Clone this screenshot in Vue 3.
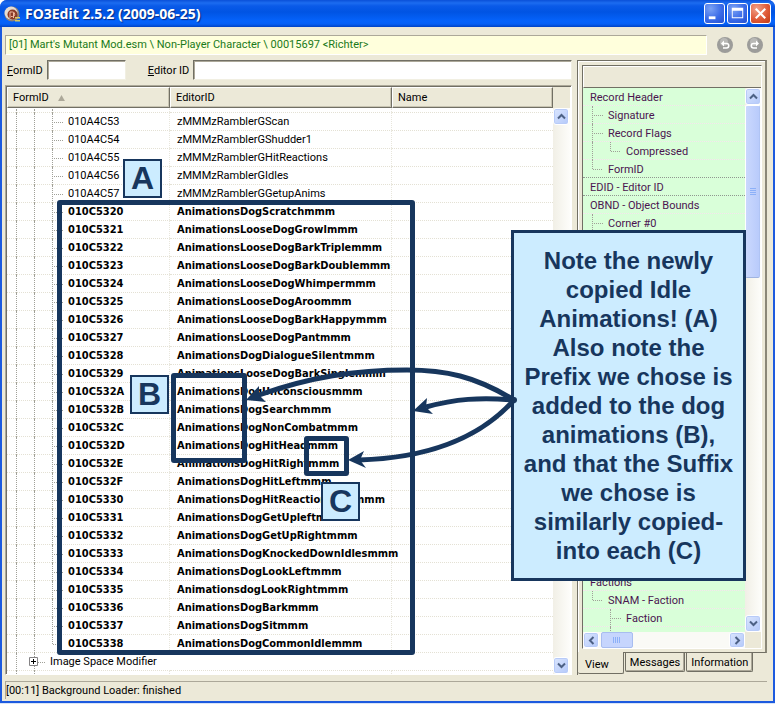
<script setup>
import { ref } from 'vue'

const formId = ref('')
const editorId = ref('')
const activeTab = ref('View')
const tabs = ['View', 'Messages', 'Information']

const plain = [
  ['010A4C53', 'zMMMzRamblerGScan'],
  ['010A4C54', 'zMMMzRamblerGShudder1'],
  ['010A4C55', 'zMMMzRamblerGHitReactions'],
  ['010A4C56', 'zMMMzRamblerGIdles'],
  ['010A4C57', 'zMMMzRamblerGGetupAnims'],
]
const copied = [
  ['010C5320', 'AnimationsDogScratchmmm'],
  ['010C5321', 'AnimationsLooseDogGrowlmmm'],
  ['010C5322', 'AnimationsLooseDogBarkTriplemmm'],
  ['010C5323', 'AnimationsLooseDogBarkDoublemmm'],
  ['010C5324', 'AnimationsLooseDogWhimpermmm'],
  ['010C5325', 'AnimationsLooseDogAroommm'],
  ['010C5326', 'AnimationsLooseDogBarkHappymmm'],
  ['010C5327', 'AnimationsLooseDogPantmmm'],
  ['010C5328', 'AnimationsDogDialogueSilentmmm'],
  ['010C5329', 'AnimationsLooseDogBarkSinglemmm'],
  ['010C532A', 'AnimationsDogUnconsciousmmm'],
  ['010C532B', 'AnimationsDogSearchmmm'],
  ['010C532C', 'AnimationsDogNonCombatmmm'],
  ['010C532D', 'AnimationsDogHitHeadmmm'],
  ['010C532E', 'AnimationsDogHitRightmmm'],
  ['010C532F', 'AnimationsDogHitLeftmmm'],
  ['010C5330', 'AnimationsDogHitReactionIdlesmmm'],
  ['010C5331', 'AnimationsDogGetUpleftmmm'],
  ['010C5332', 'AnimationsDogGetUpRightmmm'],
  ['010C5333', 'AnimationsDogKnockedDownIdlesmmm'],
  ['010C5334', 'AnimationsDogLookLeftmmm'],
  ['010C5335', 'AnimationsdogLookRightmmm'],
  ['010C5336', 'AnimationsDogBarkmmm'],
  ['010C5337', 'AnimationsDogSitmmm'],
  ['010C5338', 'AnimationsDogCommonIdlemmm'],
]
const rows = [
  ...plain.map(([id, name]) => ({ id, name, bold: false })),
  ...copied.map(([id, name]) => ({ id, name, bold: true })),
]

// guides: one entry per indent level ('', 'line', 'tee' or 'end')
const topFields = [
  { text: 'Record Header', guides: [] },
  { text: 'Signature', guides: ['tee'] },
  { text: 'Record Flags', guides: ['tee'] },
  { text: 'Compressed', guides: ['line', 'end'] },
  { text: 'FormID', guides: ['end'], section: true },
  { text: 'EDID - Editor ID', guides: [], section: true },
  { text: 'OBND - Object Bounds', guides: [] },
  { text: 'Corner #0', guides: ['tee'] },
]
const bottomFields = [
  { text: 'Factions', guides: [] },
  { text: 'SNAM - Faction', guides: ['end'] },
  { text: 'Faction', guides: ['', 'tee'] },
]
const noteLines = [
  'Note the newly',
  'copied Idle',
  'Animations! (A)',
  'Also note the',
  'Prefix we chose is',
  'added to the dog',
  'animations (B),',
  'and that the Suffix',
  'we chose is',
  'similarly copied-',
  'into each (C)',
]
</script>

<template>
  <div class="window">
    <header class="titlebar">
      <svg class="app-icon" viewBox="0 0 16 16" aria-hidden="true">
        <circle cx="8" cy="8" r="7.500" fill="#8d8078" />
        <circle cx="7" cy="7" r="6.500" fill="#e4ddd4" />
        <circle cx="8.500" cy="8.500" r="5" fill="#8a3a26" />
        <path d="M6 12V6h2.500a2 2 0 0 1 0 4.500H7M9.500 12V7" fill="none" stroke="#f0b8a0" stroke-width="1" />
        <path d="M11 11h5v1.500h-5zM11 14h5v1.500h-5z" fill="#d8c860" />
      </svg>
      <h1>FO3Edit 2.5.2 (2009-06-25)</h1>
      <button class="cap" type="button" aria-label="Minimize">
        <svg viewBox="0 0 20 20"><path d="M4 13h7v3H4z" fill="#fff" /></svg>
      </button>
      <button class="cap" type="button" aria-label="Maximize">
        <svg viewBox="0 0 20 20"><path d="M4 4h12v11H4zM5 7v7h10V7z" fill="#fff" fill-rule="evenodd" /></svg>
      </button>
      <button class="cap close" type="button" aria-label="Close">
        <svg viewBox="0 0 20 20"><path d="M5 5l10 10M15 5L5 15" stroke="#fff" stroke-width="2.200" /></svg>
      </button>
    </header>

    <div class="client">
      <div class="pathbar">
        <div class="path">[01] Mart's Mutant Mod.esm \ Non-Player Character \ 00015697 &lt;Richter&gt;</div>
        <button class="nav" type="button" aria-label="Back">
          <svg viewBox="0 0 16 16">
            <circle cx="8" cy="8" r="8" fill="#9c9c9a" /><circle cx="7" cy="5" r="4" fill="#b8b8b6" />
            <path d="M6 6.500h3.500a2.200 2.200 0 0 1 0 4.500H6" fill="none" stroke="#fff" stroke-width="1.600" />
            <path d="M7 3.500v6l-3-3z" fill="#fff" />
          </svg>
        </button>
        <button class="nav" type="button" aria-label="Forward">
          <svg viewBox="0 0 16 16">
            <circle cx="8" cy="8" r="8" fill="#9c9c9a" /><circle cx="7" cy="5" r="4" fill="#b8b8b6" />
            <path d="M10 6.500H6.500a2.200 2.200 0 0 0 0 4.500H10" fill="none" stroke="#fff" stroke-width="1.600" />
            <path d="M9 3.500v6l3-3z" fill="#fff" />
          </svg>
        </button>
      </div>

      <div class="main">
        <section class="left">
          <form class="search" @submit.prevent>
            <label for="form-id"><u>F</u>ormID</label>
            <input id="form-id" v-model="formId" class="short" type="text" />
            <label for="editor-id" class="second"><u>E</u>ditor ID</label>
            <input id="editor-id" v-model="editorId" class="long" type="text" />
          </form>
          <div class="list">
            <div class="grid">
              <table>
                <colgroup><col class="c1" /><col class="c2" /><col /></colgroup>
                <thead>
                  <tr>
                    <th>FormID <svg class="sort" viewBox="0 0 8 7"><path d="M4 0L0 7h8z" fill="#aca899" /></svg></th>
                    <th>EditorID</th>
                    <th>Name</th>
                  </tr>
                </thead>
                <tbody>
                  <tr class="sliver">
                    <td><div class="tree"><i class="g line" /><i class="g line" /><i class="g line" /></div></td>
                    <td /><td />
                  </tr>
                  <tr v-for="(r, n) in rows" :key="r.id" :class="{ bold: r.bold }">
                    <td>
                      <div class="tree">
                        <i class="g line" /><i class="g line" /><i class="g" :class="n === rows.length - 1 ? 'end' : 'tee'" />{{ r.id }}
                      </div>
                    </td>
                    <td>{{ r.name }}</td>
                    <td />
                  </tr>
                  <tr>
                    <td class="wide" colspan="3">
                      <div class="tree">
                        <i class="g line" /><i class="g tee"><svg class="plus" viewBox="0 0 9 9"><path d="M.5.5h8v8h-8z" fill="#fff" stroke="#848284" /><path d="M2 4.500h5M4.500 2v5" stroke="#000" /></svg></i>Image Space Modifier
                      </div>
                    </td>
                  </tr>
                  <tr class="sliver">
                    <td><div class="tree"><i class="g line" /><i class="g line" /></div></td>
                    <td /><td />
                  </tr>
                </tbody>
              </table>
            </div>
            <div class="side">
              <div class="corner" />
              <div class="vscroll">
                <button class="sb" type="button" aria-label="Scroll up"><svg viewBox="0 0 9 9"><path d="M1 6.500L4.500 3L8 6.500" /></svg></button>
                <div class="track" />
                <button class="sb" type="button" aria-label="Scroll down"><svg viewBox="0 0 9 9"><path d="M1 2.500L4.500 6L8 2.500" /></svg></button>
              </div>
            </div>
          </div>
        </section>

        <section class="right">
          <div class="page">
            <div class="view">
              <div class="viewhead" />
              <div class="viewbody">
                <div class="fields">
                  <div v-for="f in topFields" :key="f.text" class="field" :class="{ section: f.section }">
                    <i v-for="(g, k) in f.guides" :key="k" class="g" :class="g" />{{ f.text }}
                  </div>
                  <div class="filler" />
                  <div v-for="f in bottomFields" :key="f.text" class="field">
                    <i v-for="(g, k) in f.guides" :key="k" class="g" :class="g" />{{ f.text }}
                  </div>
                  <div class="field cut"><i class="g" /><i class="g line" /></div>
                </div>
                <div class="vscroll">
                  <button class="sb" type="button" aria-label="Scroll up"><svg viewBox="0 0 9 9"><path d="M1 6.500L4.500 3L8 6.500" /></svg></button>
                  <div class="track">
                    <div class="thumb"><svg viewBox="0 0 6 8"><path d="M0 .5h6M0 2.500h6M0 4.500h6M0 6.500h6" stroke="#8cb0f8" /></svg></div>
                  </div>
                  <button class="sb" type="button" aria-label="Scroll down"><svg viewBox="0 0 9 9"><path d="M1 2.500L4.500 6L8 2.500" /></svg></button>
                </div>
              </div>
              <div class="hrow">
                <div class="hscroll">
                  <button class="sb" type="button" aria-label="Scroll left"><svg viewBox="0 0 9 9"><path d="M6.500 1L3 4.500L6.500 8" /></svg></button>
                  <div class="hthumb"><svg viewBox="0 0 8 6"><path d="M.5 0v6M2.500 0v6M4.500 0v6M6.500 0v6" stroke="#8cb0f8" /></svg></div>
                  <button class="sb push" type="button" aria-label="Scroll right"><svg viewBox="0 0 9 9"><path d="M2.500 1L6 4.500L2.500 8" /></svg></button>
                </div>
              </div>
            </div>
          </div>
          <div class="tabs" role="tablist">
            <button v-for="t in tabs" :key="t" type="button" role="tab" :aria-selected="t === activeTab" class="tab" :class="{ active: t === activeTab }" @click="activeTab = t">{{ t }}</button>
          </div>
        </section>
      </div>

      <footer class="status">[00:11] Background Loader: finished</footer>
    </div>

    <div class="notes">
      <div class="frame frame-a" />
      <div class="frame frame-b" />
      <div class="frame frame-c" />
      <b class="tag tag-a">A</b>
      <b class="tag tag-b">B</b>
      <b class="tag tag-c">C</b>
      <p class="note"><span v-for="l in noteLines" :key="l">{{ l }}</span></p>
      <svg class="arrows" viewBox="0 0 280 110" aria-hidden="true">
        <g fill="none" stroke="#17365d" stroke-width="5">
          <path d="M274 40C235 16 205 10 167 10C115 10 70 17 19 35" />
          <path d="M274 40C240 37 215 39 186 47" />
          <path d="M274 40C240 78 190 98 119 100" />
        </g>
        <g fill="#17365d">
          <path d="M6 40L19 26L19 35L26 42z" />
          <path d="M173 51L187 38L186 47L193 54z" />
          <path d="M108 100L124 91L120 100L126 108z" />
          <circle cx="274" cy="40" r="3" />
        </g>
      </svg>
    </div>
  </div>
</template>

<style>
body { margin: 0; background: #fff; }
</style>

<style scoped>
* { box-sizing: border-box; }
.window {
  position: relative;
  display: flex;
  flex-direction: column;
  min-height: 100vh;
  margin-right: 1px;
  padding: 0 2px 2px 2px;
  background: #1c5adf;
  border-bottom: 1px solid #d8e4f8;
  border-radius: 7px 7px 0 0;
  font: 11px/18px Roboto, sans-serif;
  color: #000;
}
button { padding: 0; border: 0; font: inherit; color: inherit; }
svg { display: block; }

.titlebar {
  display: flex;
  align-items: center;
  gap: 2px;
  height: 27px;
  margin: 0 -2px;
  padding: 0 4px;
  border-radius: 7px 7px 0 0;
  background: linear-gradient(#0a50d8 0, #1c6cf0 3px, #0a5ae8 6px, #0054e3 12px, #0563fb 21px, #0560f5 24px, #0043c4 27px);
}
.app-icon { width: 16px; height: 16px; }
.titlebar h1 {
  flex: 1;
  margin: 0 0 0 3px;
  font: bold 14px/20px "Noto Sans", sans-serif;
  color: #fff;
  text-shadow: 1px 1px 1px #0a2a80;
}
.cap {
  width: 21px;
  height: 21px;
  border: 1px solid #fff;
  border-radius: 3px;
  background: radial-gradient(circle at 30% 25%, #7ba2f4, #3a6be8 55%, #2450d0);
}
.cap.close { background: radial-gradient(circle at 30% 25%, #f0a088, #e05a38 55%, #c03a14); }

.client {
  flex: 1;
  display: flex;
  flex-direction: column;
  padding: 8px 6px 2px 3px;
  background: #ece9d8;
}
.pathbar { display: flex; align-items: center; padding-right: 4px; }
.path {
  flex: 1;
  height: 20px;
  padding: 0 3px;
  border: 1px solid #fff;
  border-color: #aca899 #fff #fff #aca899;
  background: #ffffdc;
  color: #1a7a1a;
}
.nav { width: 16px; height: 16px; margin-left: 14px; background: none; }
.path + .nav { margin-left: 10px; }

.main { flex: 1; display: flex; gap: 5px; padding-top: 5px; }
.left { flex: 1; min-width: 0; display: flex; flex-direction: column; gap: 5px; }
.search { display: flex; align-items: center; gap: 4px; padding-left: 2px; }
.search .second { margin-left: 18px; }
.search label { height: 16px; white-space: nowrap; }
.search input {
  height: 20px;
  min-width: 0;
  padding: 0 3px;
  border: 1px solid #fff;
  border-color: #716f64 #f1efe2 #f1efe2 #716f64;
  box-shadow: inset 1px 1px #aca899;
  background: #fff;
  font: inherit;
}
.search .short { width: 79px; }
.search .long { flex: 1; }

.list {
  flex: 1;
  display: flex;
  border: 1px solid #fff;
  border-color: #aca899 #fff #fff #aca899;
  box-shadow: inset 1px 1px #716f64;
  padding: 1px 1px 0 1px;
  background: #fff;
}
.grid { flex: 1; min-width: 0; }
table { width: 100%; border-collapse: separate; border-spacing: 0; table-layout: fixed; }
.c1 { width: 163px; }
.c2 { width: 222px; }
th {
  height: 21px;
  padding: 1px 5px 0 5px;
  background: #ece9d8;
  border: 1px solid #716f64;
  border-color: #fff #716f64 #716f64 #fff;
  box-shadow: inset -1px -1px #c8c4b2;
  font-weight: normal;
  text-align: left;
  line-height: 18px;
}
.sort { display: inline-block; width: 7px; height: 6px; margin-left: 6px; }
td {
  height: 18px;
  padding: 0 0 0 7px;
  border-top: 1px dotted #e4e1d4;
  border-right: 1px dotted #e8e6dc;
  line-height: 17px;
  white-space: nowrap;
}
td:last-child { border-right: 0; }
td:first-child { padding-left: 9px; }
.sliver td { height: 4px; line-height: 3px; }
.sliver:first-child td { border-top-color: transparent; }
.tree { display: flex; height: 17px; }
.sliver .tree { height: 3px; }
.bold td { font-family: "DejaVu Sans Condensed", "DejaVu Sans", sans-serif; font-weight: bold; }
.g { position: relative; flex: none; width: 18px; height: 18px; font-style: normal; }
.sliver .g { height: 3px; }
.sliver:first-child .g { height: 4px; }
.tree .g:nth-child(3) { width: 16px; }
.line, .tee { border-left: 1px dotted #a0a098; }
.end::after { content: ""; position: absolute; left: 0; top: 0; height: 9px; border-left: 1px dotted #a0a098; }
.tee::before, .end::before { content: ""; position: absolute; left: 1px; top: 9px; width: 9px; border-top: 1px dotted #a0a098; }
.wide .g:last-child { width: 16px; }
.plus { position: absolute; left: -6px; top: 4px; width: 9px; height: 9px; z-index: 1; }

.side { display: flex; flex-direction: column; width: 17px; }
.corner { height: 21px; background: #ece9d8; }
.vscroll { flex: 1; display: flex; flex-direction: column; width: 17px; background: linear-gradient(90deg, #f1efe6, #fdfdfa); }
.track { flex: 1; }
.sb {
  display: grid;
  place-items: center;
  flex: none;
  width: 16px;
  height: 17px;
  border: 1px solid #fff;
  border-radius: 3px;
  background: linear-gradient(135deg, #dbe6fe, #b4c9fa);
  box-shadow: inset 0 0 0 1px #b8cbf8;
}
.sb svg { width: 9px; height: 9px; }
.sb path { fill: none; stroke: #4d6185; stroke-width: 2; }

.right { display: flex; flex-direction: column; flex: none; width: 190px; }
.page {
  flex: 1;
  display: flex;
  padding: 4px 3px 3px 4px;
  border: 1px solid #716f64;
  border-right: 2px solid #8a8778;
  box-shadow: inset 1px 1px #fff;
}
.view { flex: 1; min-width: 0; display: flex; flex-direction: column; border: 1px solid #716f64; border-color: #716f64 #fff #fff #716f64; }
.viewhead { height: 22px; border-top: 1px solid #fff; border-left: 1px solid #fff; border-bottom: 1px solid #716f64; background: #ece9d8; }
.viewbody { flex: 1; display: flex; }
.fields { flex: 1; min-width: 0; display: flex; flex-direction: column; background: #d9ffd9; color: #4b1450; }
.field { display: flex; height: 18px; padding-left: 7px; border-bottom: 1px dotted #f6e4ee; line-height: 19px; white-space: nowrap; }
.field .g:first-child { margin-left: 2px; }
.field .g:last-of-type { width: 16px; }
.field.section { border-bottom-color: #909890; }
.field.cut { height: 5px; border: 0; overflow: hidden; }
.filler { flex: 1; }
.viewbody .vscroll { flex: none; width: 16px; }
.thumb, .hthumb { display: grid; place-items: center; border: 1px solid #a8bdf0; border-radius: 2px; background: #c6d5fd; }
.thumb { width: 15px; height: 173px; background: linear-gradient(90deg, #cad8fd, #b9cbfb); border-color: #fff #b0c4f4 #a0b4e0 #fff; }
.thumb svg { width: 6px; height: 8px; }
.hrow { display: flex; padding-right: 16px; background: #ece9d8; }
.hscroll { flex: 1; display: flex; gap: 2px; height: 16px; background: #fafaf6; }
.hscroll .sb { height: 16px; }
.hthumb { width: 32px; }
.hthumb svg { width: 8px; height: 6px; }
.push { margin-left: auto; }

.tabs { display: flex; gap: 1px; height: 22px; border-left: 1px solid #716f64; }
.tab {
  height: 19px;
  padding: 1px 4px 0 4px;
  border: 1px solid #716f64;
  border-top: 0;
  border-radius: 0 0 2px 2px;
  box-shadow: inset -1px -1px #aca899;
  background: #ece9d8;
  line-height: 18px;
}
.tab.active { height: 22px; margin-top: -1px; padding: 4px 14px 0 7px; border-left: 0; box-shadow: none; }

.status {
  height: 18px;
  margin-top: 6px;
  border-top: 1px solid #aca899;
  border-left: 1px solid #aca899;
  line-height: 18px;
}

.notes { position: absolute; left: 0; top: 0; color: #17365d; pointer-events: none; font-family: "Liberation Sans", Arial, sans-serif; }
.frame { position: absolute; border: 5px solid #17365d; border-radius: 3px; }
.frame-a { left: 57px; top: 200px; width: 358px; height: 455px; }
.frame-b { left: 171px; top: 373px; width: 76px; height: 90px; }
.frame-c { left: 304px; top: 436px; width: 45px; height: 40px; }
.tag {
  position: absolute;
  width: 39px;
  height: 39px;
  border: 2px solid #17365d;
  background: #ccecff;
  font-size: 32px;
  line-height: 35px;
  text-align: center;
}
.tag-a { left: 123px; top: 159px; }
.tag-b { left: 130px; top: 375px; }
.tag-c { left: 321px; top: 482px; }
.note {
  position: absolute;
  left: 511px;
  top: 230px;
  width: 235px;
  height: 351px;
  margin: 0;
  padding-top: 13px;
  border: 3px solid #17365d;
  background: #ccecff;
  font-size: 24px;
  font-weight: bold;
  line-height: 29px;
  text-align: center;
}
.note span { display: block; white-space: nowrap; }
.arrows { position: absolute; left: 240px; top: 360px; width: 280px; height: 110px; }
</style>
